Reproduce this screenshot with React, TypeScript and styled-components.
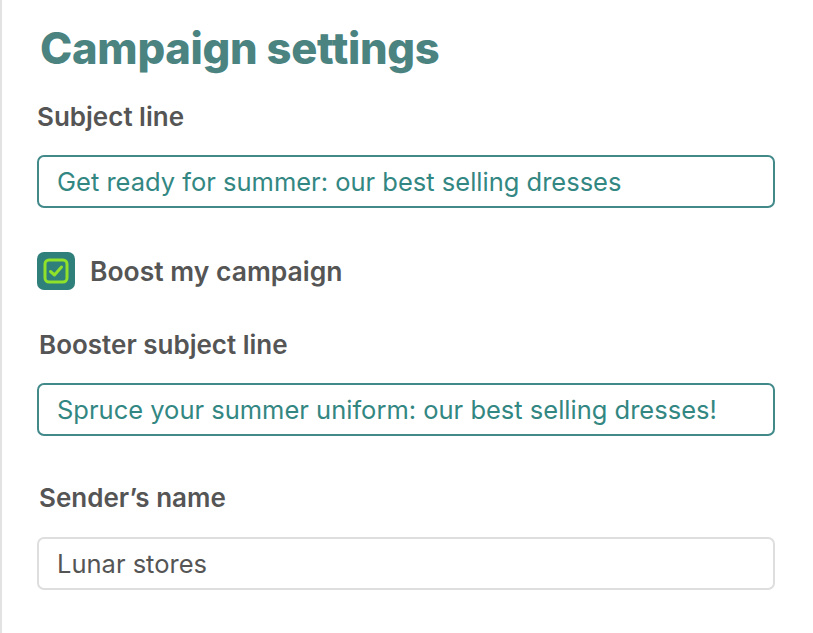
import React from "react";
import styled, { createGlobalStyle } from "styled-components";

const Global = createGlobalStyle`
  html, body { margin: 0; padding: 0; background: #ffffff; }
  body { font-family: "Inter", "Noto Sans", sans-serif; }
  * { box-sizing: border-box; }
`;

const Panel = styled.div`
  width: 813px;
  height: 633px;
  border-left: 2px solid #e2e2e2;
  background: #ffffff;
  padding: 22px 38px 0 35px;
  display: flex;
  flex-direction: column;
`;

const Title = styled.h1`
  margin: 0 0 0 3px;
  font-family: "Inter", sans-serif;
  font-weight: 800;
  font-size: 43.5px;
  line-height: 52px;
  letter-spacing: -0.3px;
  color: #4a837f;
`;

const Label = styled.div<{ $mt: number; $ml?: number }>`
  margin-top: ${(p) => p.$mt}px;
  margin-left: ${(p) => p.$ml ?? 0}px;
  font-weight: 600;
  font-size: 26px;
  line-height: 30px;
  color: #555555;
`;

const Field = styled.div<{ $mt: number; $active?: boolean }>`
  margin-top: ${(p) => p.$mt}px;
  height: 53px;
  border: 2px solid ${(p) => (p.$active ? "#42898a" : "#dedede")};
  border-radius: 7px;
  display: flex;
  align-items: center;
  padding: 0 18px;
  font-size: 25.5px;
  color: ${(p) => (p.$active ? "#338782" : "#555555")};
  white-space: nowrap;
`;

const CheckRow = styled.div`
  margin-top: 44px;
  display: flex;
  align-items: center;
  gap: 15px;
`;

const Box = styled.div`
  width: 38px;
  height: 38px;
  border-radius: 7px;
  background: #2f7f7a;
  display: flex;
  align-items: center;
  justify-content: center;
`;

const CheckLabel = styled.span`
  font-weight: 600;
  font-size: 26.5px;
  color: #555555;
`;

export default function App() {
  return (
    <>
      <Global />
      <Panel>
        <Title>Campaign settings</Title>
        <Label $mt={28}>Subject line</Label>
        <Field $mt={23} $active>
          Get ready for summer: our best selling dresses
        </Field>
        <CheckRow>
          <Box>
            <svg width="26" height="26" viewBox="0 0 26 26" fill="none">
              <rect x="2" y="2" width="22" height="22" rx="4" stroke="#8fe12a" strokeWidth="3" />
              <path d="M7.5 13.5 L11.5 17 L18.5 9" stroke="#8fe12a" strokeWidth="3" strokeLinecap="round" strokeLinejoin="round" />
            </svg>
          </Box>
          <CheckLabel>Boost my campaign</CheckLabel>
        </CheckRow>
        <Label $mt={40} $ml={2}>Booster subject line</Label>
        <Field $mt={23} $active>
          Spruce your summer uniform: our best selling dresses!
        </Field>
        <Label $mt={47} $ml={2}>Sender’s name</Label>
        <Field $mt={24}>Lunar stores</Field>
      </Panel>
    </>
  );
}
